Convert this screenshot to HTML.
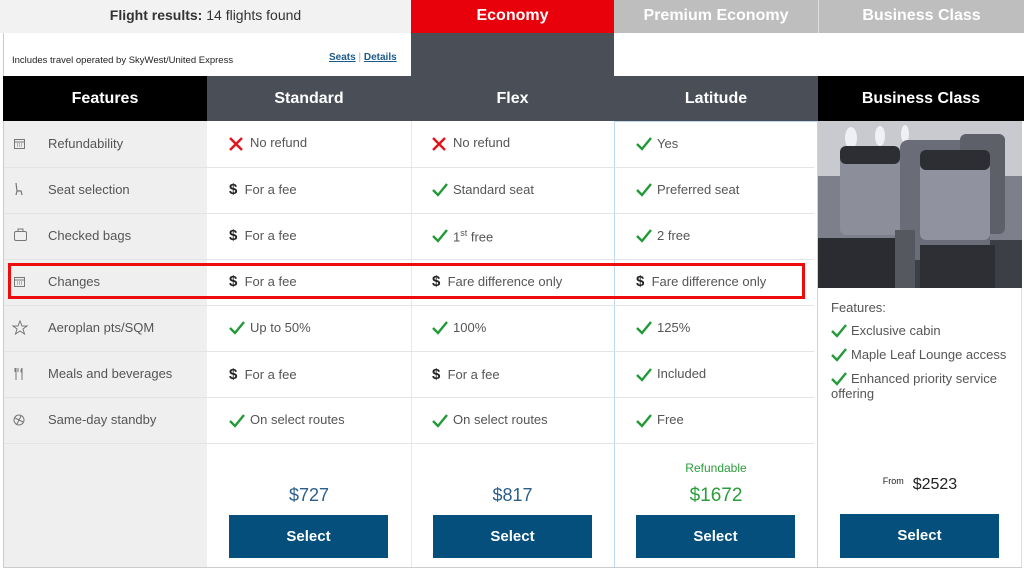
<!DOCTYPE html>
<html><head><meta charset="utf-8"><style>
*{margin:0;padding:0;box-sizing:border-box}
body{width:1024px;height:572px;background:#fff;font-family:"Liberation Sans",sans-serif;position:relative;overflow:hidden;color:#444}
.a{position:absolute}
.hd{color:#fff;font-weight:bold;font-size:16px;text-align:center}
.t{position:absolute;font-size:13px;color:#555;white-space:nowrap}
.hl{position:absolute;height:1px;background:#e4e4e4}
.btn{position:absolute;background:#044f7c;color:#fff;font-weight:bold;font-size:15px;text-align:center;line-height:43px;width:159px;height:43px}
.price{position:absolute;font-size:18px;color:#2b5f8a;text-align:center}
</style></head><body>
<div class="a" style="left:0;top:0;width:411px;height:33px;background:#f2f2f2"></div>
<div class="a" style="left:0;top:7px;width:411px;text-align:center;font-size:14px;color:#333"><b>Flight results:</b> 14 flights found</div>
<div class="a hd" style="left:411px;top:0;width:203px;height:33px;background:#e8000b;line-height:32px">Economy</div>
<div class="a hd" style="left:614px;top:0;width:204px;height:33px;background:#bebebe;line-height:32px">Premium Economy</div>
<div class="a hd" style="left:818px;top:0;width:206px;height:33px;background:#bebebe;line-height:32px;border-left:1px solid #ddd">Business Class</div>
<div class="a" style="left:3px;top:33px;width:1px;height:535px;background:#ccc"></div>
<div class="a" style="left:12px;top:55px;font-size:9.5px;color:#222">Includes travel operated by SkyWest/United Express</div>
<div class="a" style="left:329px;top:52px;font-size:10px;color:#1b5a8c;font-weight:bold"><u>Seats</u> <span style="color:#aaa;font-weight:normal">|</span> <u>Details</u></div>
<div class="a" style="left:411px;top:33px;width:203px;height:43px;background:#4a4f57"></div>
<div class="a hd" style="left:3px;top:76px;width:204px;height:45px;background:#000;line-height:45px">Features</div>
<div class="a hd" style="left:207px;top:76px;width:611px;height:45px;background:#4a4f57"></div>
<div class="a hd" style="left:207px;top:76px;width:204px;line-height:45px">Standard</div>
<div class="a hd" style="left:411px;top:76px;width:203px;line-height:45px">Flex</div>
<div class="a hd" style="left:614px;top:76px;width:204px;line-height:45px">Latitude</div>
<div class="a hd" style="left:818px;top:76px;width:206px;height:45px;background:#000;line-height:45px">Business Class</div>
<div class="a" style="left:4px;top:121px;width:203px;height:447px;background:#efefef"></div>
<div class="a" style="left:411px;top:121px;width:1px;height:447px;background:#e8e8e8"></div>
<div class="a" style="left:614px;top:121px;width:204px;height:447px;border:1.5px solid #bcd8ee"></div>
<div class="a" style="left:1021px;top:121px;width:1px;height:447px;background:#ddd"></div>
<div class="a" style="left:3px;top:567px;width:1019px;height:1px;background:#ccc"></div>
<div class="hl" style="left:4px;top:167px;width:810px"></div>
<div class="hl" style="left:4px;top:213px;width:810px"></div>
<div class="hl" style="left:4px;top:259px;width:810px"></div>
<div class="hl" style="left:4px;top:305px;width:810px"></div>
<div class="hl" style="left:4px;top:351px;width:810px"></div>
<div class="hl" style="left:4px;top:397px;width:810px"></div>
<div class="hl" style="left:4px;top:443px;width:810px"></div>

<svg class="a" style="left:0;top:0" width="1024" height="572">
<defs>
<path id="ck" d="M0 6 L5 11 L14 0" fill="none" stroke="#219a38" stroke-width="2.4"/>
<path id="xx" d="M0 0 L12 12 M12 0 L0 12" fill="none" stroke="#e3131b" stroke-width="2.4"/>
<g id="cal" fill="none" stroke="#777" stroke-width="1"><rect x="0.5" y="1.5" width="10" height="9"/><path d="M0.5 4h10M3 6h1M5 6h1M7 6h1M3 8h1M5 8h1M7 8h1"/></g>
</defs>
<use href="#cal" x="14" y="138"/>
<path d="M16 183 L17 191 L21 191 L22 195 M17 191 L16 195" fill="none" stroke="#777" stroke-width="1.2"/>
<rect x="14.5" y="231.5" width="12" height="9" rx="1.5" fill="none" stroke="#777"/>
<path d="M18 231 v-2 h5 v2" fill="none" stroke="#777"/>
<use href="#cal" x="14" y="276"/>
<path d="M20 321 L22 326 L27 326 L23 329 L24.5 334 L20 331 L15.5 334 L17 329 L13 326 L18 326 Z" fill="none" stroke="#777"/>
<path d="M16 368 v12 M15 368v4M18 368v4 M22 368 v12 M22 368 q-2 3 0 5" fill="none" stroke="#777"/>
<circle cx="19" cy="420" r="5" fill="none" stroke="#777"/><path d="M15 418 L23 422 M17 424 L21 416" stroke="#777"/>
<use href="#xx" x="230" y="138"/>
<use href="#ck" x="230" y="322"/><use href="#ck" x="230" y="415"/>
<use href="#xx" x="433" y="138"/>
<use href="#ck" x="433" y="184"/><use href="#ck" x="433" y="230"/><use href="#ck" x="433" y="322"/><use href="#ck" x="433" y="415"/>
<use href="#ck" x="637" y="138"/><use href="#ck" x="637" y="184"/><use href="#ck" x="637" y="230"/><use href="#ck" x="637" y="322"/><use href="#ck" x="637" y="369"/><use href="#ck" x="637" y="415"/>
<use href="#ck" x="832" y="325"/><use href="#ck" x="832" y="349"/><use href="#ck" x="832" y="373"/>
<rect x="818" y="121" width="204" height="167" fill="#7d808b"/>
<rect x="818" y="121" width="204" height="55" fill="#c8cad0"/>
<ellipse cx="851" cy="138" rx="6" ry="11" fill="#eef0f3"/>
<ellipse cx="880" cy="136" rx="5" ry="10" fill="#eef0f3"/>
<ellipse cx="905" cy="134" rx="4" ry="9" fill="#eef0f3"/>
<rect x="818" y="240" width="204" height="48" fill="#3d3f46"/>
<rect x="900" y="140" width="90" height="120" rx="8" fill="#6a6d77"/>
<rect x="960" y="134" width="45" height="100" rx="6" fill="#5d6069"/>
<rect x="840" y="150" width="60" height="85" rx="6" fill="#8c8f99"/>
<rect x="840" y="146" width="60" height="18" rx="6" fill="#2c2e33"/>
<rect x="920" y="155" width="70" height="85" rx="6" fill="#9092a0"/>
<rect x="920" y="150" width="70" height="20" rx="6" fill="#2c2e33"/>
<rect x="818" y="238" width="90" height="50" fill="#2a2c31"/>
<rect x="895" y="230" width="20" height="58" fill="#55585f"/>
<rect x="920" y="245" width="75" height="43" fill="#2d2f35"/>
<rect x="9.5" y="264.5" width="794" height="33" fill="none" stroke="#ee0b0b" stroke-width="3"/>
</svg>

<div class="t" style="left:48px;top:136px">Refundability</div>
<div class="t" style="left:48px;top:182px">Seat selection</div>
<div class="t" style="left:48px;top:228px">Checked bags</div>
<div class="t" style="left:48px;top:274px">Changes</div>
<div class="t" style="left:48px;top:320px">Aeroplan pts/SQM</div>
<div class="t" style="left:48px;top:366px">Meals and beverages</div>
<div class="t" style="left:48px;top:412px">Same-day standby</div>
<div class="t" style="left:250px;top:135px">No refund</div>
<div class="t" style="left:229px;top:181px"><b style="color:#222;font-size:15px">$</b>&nbsp; For a fee</div>
<div class="t" style="left:229px;top:227px"><b style="color:#222;font-size:15px">$</b>&nbsp; For a fee</div>
<div class="t" style="left:229px;top:273px"><b style="color:#222;font-size:15px">$</b>&nbsp; For a fee</div>
<div class="t" style="left:250px;top:320px">Up to 50%</div>
<div class="t" style="left:229px;top:366px"><b style="color:#222;font-size:15px">$</b>&nbsp; For a fee</div>
<div class="t" style="left:250px;top:412px">On select routes</div>
<div class="t" style="left:453px;top:135px">No refund</div>
<div class="t" style="left:453px;top:182px">Standard seat</div>
<div class="t" style="left:453px;top:228px">1<sup style="font-size:9px">st</sup> free</div>
<div class="t" style="left:432px;top:273px"><b style="color:#222;font-size:15px">$</b>&nbsp; Fare difference only</div>
<div class="t" style="left:453px;top:320px">100%</div>
<div class="t" style="left:432px;top:366px"><b style="color:#222;font-size:15px">$</b>&nbsp; For a fee</div>
<div class="t" style="left:453px;top:412px">On select routes</div>
<div class="t" style="left:657px;top:136px">Yes</div>
<div class="t" style="left:657px;top:182px">Preferred seat</div>
<div class="t" style="left:657px;top:228px">2 free</div>
<div class="t" style="left:636px;top:273px"><b style="color:#222;font-size:15px">$</b>&nbsp; Fare difference only</div>
<div class="t" style="left:657px;top:320px">125%</div>
<div class="t" style="left:657px;top:366px">Included</div>
<div class="t" style="left:657px;top:412px">Free</div>
<div class="t" style="left:831px;top:300px">Features:</div>
<div class="t" style="left:851px;top:323px">Exclusive cabin</div>
<div class="t" style="left:851px;top:347px">Maple Leaf Lounge access</div>
<div class="t" style="left:851px;top:371px">Enhanced priority service</div>
<div class="t" style="left:831px;top:386px">offering</div>
<div class="price" style="left:207px;top:485px;width:204px">$727</div>
<div class="price" style="left:411px;top:485px;width:203px">$817</div>
<div class="a" style="left:614px;top:461px;width:204px;text-align:center;font-size:12px;color:#2a9d3a">Refundable</div>
<div class="price" style="left:614px;top:485px;width:204px;color:#2a9d3a;font-size:19px">$1672</div>
<div class="a" style="left:818px;top:476px;width:204px;text-align:center;font-size:16px;color:#222"><span style="font-size:9px;vertical-align:5px">From</span>&nbsp; $2523</div>
<div class="btn" style="left:229px;top:515px">Select</div>
<div class="btn" style="left:433px;top:515px">Select</div>
<div class="btn" style="left:636px;top:515px">Select</div>
<div class="btn" style="left:840px;top:514px;height:44px">Select</div>
</body></html>
